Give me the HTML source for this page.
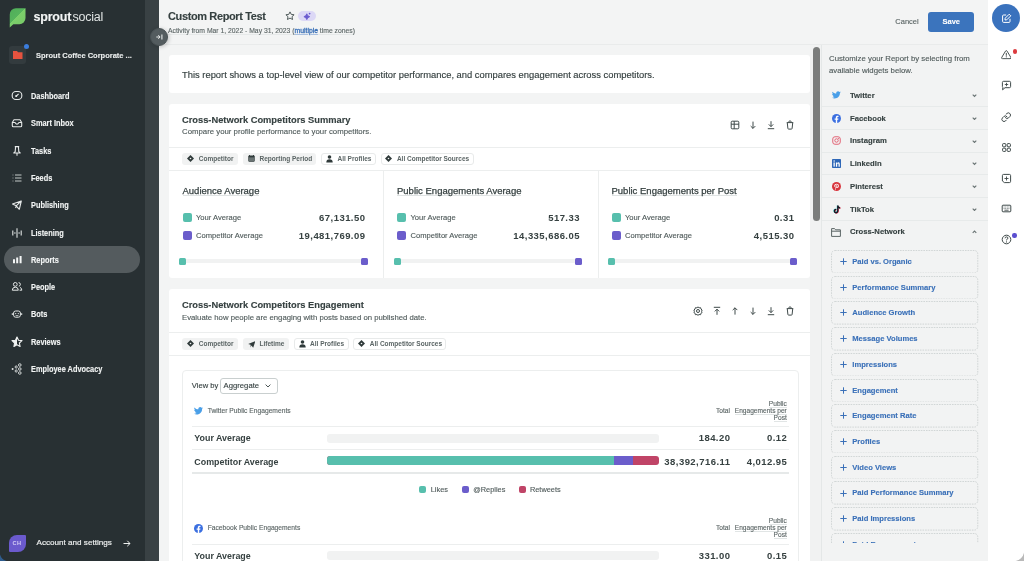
<!DOCTYPE html>
<html><head><meta charset="utf-8">
<style>
*{box-sizing:border-box;margin:0;padding:0}
html{background:#f3f4f4}
html,body{width:1024px;height:561px;overflow:hidden;}
body{will-change:transform;-webkit-text-stroke-width:.12px;font-family:"Liberation Sans",sans-serif;color:#364141}
.a{position:absolute}
.t{position:absolute;white-space:nowrap;line-height:1}
#side{left:0;top:0;width:145px;height:561px;background:#283033}
#strip{left:145px;top:0;width:14px;height:561px;background:#394144}
.nav{position:absolute;left:31.2px;transform:scaleX(.9);transform-origin:0 0;font-weight:700;font-size:8.2px;color:#f2f4f4;white-space:nowrap;line-height:1}
.nic{position:absolute;left:11px;width:12px;height:12px}
#hdr{left:159px;top:0;width:829px;height:45px;background:#f3f4f4;border-bottom:1px solid #e9ebeb}
.card{position:absolute;z-index:-1;left:169px;width:641px;background:#fff;border-radius:3px}
.hr{position:absolute;height:1px;background:#eceeee}
.chip{position:absolute;height:12.5px;border-radius:3px;font-size:6.5px;font-weight:700;color:#5b6565;-webkit-text-stroke-width:0;white-space:nowrap;line-height:12.5px}
.chip.g{background:#f1f2f2}
.chip.w{background:#fff;border:1px solid #e8eaea;line-height:10.5px}
.chip svg{position:absolute;top:2.6px}
.chip.w svg{top:1.7px}
.sq{position:absolute;width:9px;height:9px;border-radius:2px}
.teal{background:#57bfad}.purp{background:#6b5dcb}.red{background:#c04467}
.widget{position:absolute;width:147.3px;height:23.6px}
.widget>svg.bd{position:absolute;left:0;top:0}
.wtxt{position:absolute;left:21px;top:8px;font-size:7.6px;font-weight:700;color:#3a70b8;white-space:nowrap;line-height:1}
.wplus{position:absolute;left:8.8px;top:8.2px;width:7px;height:7px}
.net{position:absolute;left:850px;font-size:7.7px;font-weight:700;color:#364141;white-space:nowrap;line-height:1}
.pdiv{position:absolute;left:822px;width:166px;height:1px;background:#e7eaea}
.mtitle{font-size:9.5px;color:#364141;border-bottom:1px solid #dfe3e3;padding-bottom:0;-webkit-text-stroke:.25px #364141}
.mlab{font-size:7.6px;color:#4f5a5a}
.mval{font-size:9.5px;font-weight:700;color:#364141;letter-spacing:.45px;margin-right:-.45px;-webkit-text-stroke-width:0}
.rail{position:absolute;left:1000px;width:12px;height:12px}
</style></head><body>

<!-- SIDEBAR -->
<div id="side" class="a"></div>
<div id="strip" class="a"></div>

<!-- logo -->
<svg class="a" style="left:0;top:0" width="40" height="32" viewBox="0 0 40 32">
<defs><linearGradient id="lg" x1="9.75" y1="8.25" x2="25.5" y2="24" gradientUnits="userSpaceOnUse"><stop offset="0" stop-color="#4fae58"/><stop offset=".5" stop-color="#56b45d"/><stop offset=".5" stop-color="#7ccf6b"/><stop offset="1" stop-color="#77c867"/></linearGradient></defs>
<path d="M9.75 14.5 A6.2 6.2 0 0 1 15.95 8.25 H25.5 V18.05 A6.2 6.2 0 0 1 19.3 24.25 H13.3 L9.75 27.6 Z" fill="url(#lg)"/>
</svg>
<div class="t" style="left:33.5px;top:11.2px;font-size:12.5px;color:#f4f6f6;letter-spacing:-0.2px"><span style="font-weight:700">sprout</span><span style="font-weight:400;margin-left:1.2px;color:#dfe3e3;-webkit-text-stroke-width:0">social</span></div>

<!-- workspace -->
<div class="a" style="left:9px;top:45.5px;width:17px;height:18px;border-radius:3px;background:#333b3e"></div>
<svg class="a" style="left:12.5px;top:50.5px" width="10" height="8" viewBox="0 0 10 8"><path d="M0 0 H4 L5 1.3 H9.5 V8 H0 Z" fill="#e5533f"/></svg>
<div class="a" style="left:24px;top:43.5px;width:5px;height:5px;border-radius:50%;background:#3b7ddd"></div>
<div class="t" style="left:36px;top:51.5px;font-size:7.5px;font-weight:700;color:#e9ecec">Sprout Coffee Corporate ...</div>

<!-- nav -->
<div class="a" style="left:4px;top:246px;width:136px;height:27px;border-radius:13.5px;background:#545b5e"></div>
<svg class="nic" style="top:90.0px" viewBox="0 0 12 12"><rect x="1.2" y="1.5" width="9.6" height="8" rx="3.6" fill="none" stroke="#e6e9e9" stroke-width="1.1"/><path d="M4.8 6.6 L7.6 3.8" stroke="#e6e9e9" stroke-width="1.2"/><circle cx="5.2" cy="6.1" r="1" fill="#e6e9e9"/></svg>
<div class="nav" style="top:93.06px">Dashboard</div>
<svg class="nic" style="top:117.3px" viewBox="0 0 12 12"><path d="M1.3 5.5 V8.8 Q1.3 9.8 2.3 9.8 H9.7 Q10.7 9.8 10.7 8.8 V5.5 L9 2.7 H3 Z M1.3 5.5 H4 Q5 7.2 6 7.2 Q7 7.2 8 5.5 H10.7" fill="none" stroke="#e6e9e9" stroke-width="1.1" stroke-linejoin="round"/></svg>
<div class="nav" style="top:120.36px">Smart Inbox</div>
<svg class="nic" style="top:144.6px" viewBox="0 0 12 12"><path d="M3.8 1.6 H8.2 M4.6 1.6 L4.2 6.6 L2.8 8 H9.2 L7.8 6.6 L7.4 1.6 M6 8 V10.8" fill="none" stroke="#e6e9e9" stroke-width="1.1" stroke-linejoin="round"/></svg>
<div class="nav" style="top:147.66px">Tasks</div>
<svg class="nic" style="top:172.0px" viewBox="0 0 12 12"><path d="M1.6 3 H2.4 M1.6 6 H2.4 M1.6 9 H2.4" stroke="#aab1b1" stroke-width="1"/><path d="M4 3 H10.5 M4 6 H10.5 M4 9 H10.5" stroke="#c4caca" stroke-width="1"/></svg>
<div class="nav" style="top:175.06px">Feeds</div>
<svg class="nic" style="top:199.0px" viewBox="0 0 12 12"><path d="M1.5 5 L10.3 2 L8.3 10.3 L5.2 6.8 Z M5.2 6.8 L10.3 2 M5.2 6.8 L4.6 9" fill="none" stroke="#e6e9e9" stroke-width="1.1" stroke-linejoin="round"/></svg>
<div class="nav" style="top:202.06px">Publishing</div>
<svg class="nic" style="top:226.5px" viewBox="0 0 12 12"><path d="M1.8 3.6 V8.4 M6 1.2 V10.8 M10.2 3.6 V8.4" stroke="#dfe3e3" stroke-width="1.1"/><path d="M3.9 5.2 V6.8 M8.1 5.2 V6.8" stroke="#dfe3e3" stroke-width="1.1"/></svg>
<div class="nav" style="top:229.56px">Listening</div>
<svg class="nic" style="top:254.0px" viewBox="0 0 12 12"><path d="M2 5.2 H4 V9.2 H2Z M5.2 3.4 H7.2 V9.2 H5.2Z M8.6 2.1 H10.6 V9.2 H8.6Z" fill="#f4f6f6"/></svg>
<div class="nav" style="top:257.06px">Reports</div>
<svg class="nic" style="top:281.0px" viewBox="0 0 12 12"><circle cx="4.3" cy="3.4" r="1.9" fill="none" stroke="#e6e9e9" stroke-width="1"/><path d="M1.3 9.2 Q1.3 6.2 4.3 6.2 Q7.3 6.2 7.3 9.2 Z" fill="none" stroke="#e6e9e9" stroke-width="1"/><path d="M7.6 1.6 Q9.6 1.8 9.4 3.6 Q9.2 5 7.8 5.2 M9 6.4 Q10.8 7 10.8 9.2 H8.6" fill="none" stroke="#e6e9e9" stroke-width="1"/></svg>
<div class="nav" style="top:284.06px">People</div>
<svg class="nic" style="top:308.4px" viewBox="0 0 12 12"><rect x="2.6" y="3" width="6.8" height="6.2" rx="2" fill="none" stroke="#e6e9e9" stroke-width="1"/><path d="M1.3 5.2 V7 M10.7 5.2 V7" stroke="#e6e9e9" stroke-width="1"/><circle cx="4.7" cy="5.6" r=".65" fill="#e6e9e9"/><circle cx="7.3" cy="5.6" r=".65" fill="#e6e9e9"/><path d="M4.6 7.6 H7.4" stroke="#e6e9e9" stroke-width=".8"/></svg>
<div class="nav" style="top:311.46px">Bots</div>
<svg class="nic" style="top:335.8px" viewBox="0 0 12 12"><path d="M6 1 L7.5 4.2 L11 4.6 L8.4 7 L9.1 10.5 L6 8.8 L2.9 10.5 L3.6 7 L1 4.6 L4.5 4.2 Z" fill="none" stroke="#f0f2f2" stroke-width="1.1" stroke-linejoin="round"/><path d="M6 1 L4.5 4.2 L1 4.6 L3.6 7 L2.9 10.5 L6 8.8Z" fill="#f0f2f2"/></svg>
<div class="nav" style="top:338.86px">Reviews</div>
<svg class="nic" style="top:363.3px" viewBox="0 0 12 12"><circle cx="8.8" cy="2" r="1.3" fill="none" stroke="#e0e3e3" stroke-width=".9"/><circle cx="8.8" cy="6" r="1.3" fill="none" stroke="#e0e3e3" stroke-width=".9"/><circle cx="8.8" cy="10" r="1.3" fill="none" stroke="#e0e3e3" stroke-width=".9"/><circle cx="5.2" cy="4" r="1.1" fill="none" stroke="#e0e3e3" stroke-width=".9"/><circle cx="5.2" cy="8" r="1.1" fill="none" stroke="#e0e3e3" stroke-width=".9"/><circle cx="1.6" cy="6" r="1" fill="#e0e3e3"/></svg>
<div class="nav" style="top:366.36px">Employee Advocacy</div>

<!-- account -->
<div class="a" style="left:9px;top:534.5px;width:17px;height:17.5px;background:#6b5acd;border-radius:8px 1px 8px 1px"></div>
<div class="t" style="left:12.4px;top:540.5px;font-size:5.6px;font-weight:700;color:#d5cef5;letter-spacing:.5px;-webkit-text-stroke-width:0">CH</div>
<div class="t" style="left:36.6px;top:539.3px;font-size:8.1px;color:#eef0f0;-webkit-text-stroke-width:.18px">Account and settings</div>
<svg class="a" style="left:122.6px;top:539.6px" width="8" height="7" viewBox="0 0 8 7"><path d="M0.5 3.5 H7 M4.3 0.8 L7 3.5 L4.3 6.2" fill="none" stroke="#eef0f0" stroke-width="1"/></svg>

<!-- HEADER -->
<div id="hdr" class="a"></div>
<div class="t" style="left:168px;top:11px;font-size:11px;font-weight:700;letter-spacing:-0.38px;color:#364141">Custom Report Test</div>
<div class="t" style="left:168px;top:27.5px;font-size:6.8px;color:#5b6565;border-bottom:1px solid #e6e9e9;padding-bottom:0">Activity from Mar 1, 2022 - May 31, 2023 (<span style="color:#3a70b8;text-decoration:underline;text-decoration-color:#a9c0e0;-webkit-text-stroke-width:.3px">multiple</span> time zones)</div>

<!-- collapse button -->
<div class="a" style="left:150px;top:28px;width:18px;height:18px;border-radius:50%;background:#545c5f;border:.5px solid #4a5255;box-shadow:1px 1px 4px rgba(0,0,0,.22)"></div>
<svg class="a" style="left:155.5px;top:34px" width="7" height="6" viewBox="0 0 7 6"><path d="M0.3 3 H4 M2.3 1.2 L4.1 3 L2.3 4.8" fill="none" stroke="#e9ecec" stroke-width="1"/><path d="M5.9 0.4 V5.6" stroke="#e9ecec" stroke-width="1.1"/></svg>
<svg class="a" style="left:285.3px;top:11px" width="10" height="9.5" viewBox="0 0 10 9.5"><path d="M5 .9 L6.25 3.4 L9.1 3.75 L7 5.65 L7.55 8.5 L5 7.1 L2.45 8.5 L3 5.65 L.9 3.75 L3.75 3.4Z" fill="none" stroke="#4a5555" stroke-width=".95" stroke-linejoin="round"/></svg>
<div class="a" style="left:298.2px;top:11.1px;width:18px;height:9.7px;border-radius:5px;background:#dcd8f6"></div>
<svg class="a" style="left:302px;top:11.5px" width="10" height="9" viewBox="0 0 10 9"><path d="M4.8 1.8 Q5.3 4.1 7.7 4.7 Q5.3 5.3 4.8 7.6 Q4.3 5.3 1.9 4.7 Q4.3 4.1 4.8 1.8Z" fill="#6a5acf" stroke="#6a5acf" stroke-width=".9" stroke-linejoin="round"/><circle cx="7.6" cy="1.6" r=".9" fill="#6a5acf"/></svg>

<!-- Main cards -->
<div class="card" style="top:55px;height:38px"></div>
<div class="t" style="left:182px;top:69.5px;font-size:9.4px;color:#364141;-webkit-text-stroke:.15px #364141">This report shows a top-level view of our competitor performance, and compares engagement across competitors.</div>

<div class="card" style="top:104px;height:174px"></div>
<div class="t" style="left:182px;top:115.5px;font-size:9.3px;font-weight:700;color:#364141">Cross-Network Competitors Summary</div>
<div class="t" style="left:182px;top:128px;font-size:7.8px;color:#4f5a5a">Compare your profile performance to your competitors.</div>
<div class="hr" style="left:169px;top:147px;width:641px"></div>
<div class="hr" style="left:169px;top:170px;width:641px"></div>

<!-- card header icons -->
<svg class="a" style="left:730.0px;top:120.3px" width="10" height="10" viewBox="0 0 10 10"><rect x="1.2" y="1.2" width="7.6" height="7.6" rx="1" fill="none" stroke="#3f4a4a" stroke-width="1"/><path d="M1.2 4.2 H8.8 M4.2 1.2 V8.8" fill="none" stroke="#3f4a4a" stroke-width="1"/></svg>
<svg class="a" style="left:748.2px;top:120.3px" width="10" height="10" viewBox="0 0 10 10"><path d="M5 1.6 V8.4 M2.7 6.1 L5 8.4 L7.3 6.1" fill="none" stroke="#3f4a4a" stroke-width="1"/></svg>
<svg class="a" style="left:766.2px;top:120.3px" width="10" height="10" viewBox="0 0 10 10"><path d="M5 1.2 V6.6 M2.8 4.4 L5 6.6 L7.2 4.4 M1.8 8.7 H8.2" fill="none" stroke="#3f4a4a" stroke-width="1"/></svg>
<svg class="a" style="left:784.8px;top:120.3px" width="10" height="10" viewBox="0 0 10 10"><path d="M2.3 3 L2.9 8.5 Q3 9.1 3.6 9.1 H6.4 Q7 9.1 7.1 8.5 L7.7 3 M1.7 2.6 H8.3 M3.9 2.4 V1.6 Q3.9 1 4.5 1 H5.5 Q6.1 1 6.1 1.6 V2.4" fill="none" stroke="#3f4a4a" stroke-width="1"/></svg>
<svg class="a" style="left:693.2px;top:305.6px" width="10" height="10" viewBox="0 0 10 10"><path d="M5 0.9 L6.1 1.8 L7.6 1.7 L8 3.1 L9.1 4 L8.6 5.3 L9.1 6.5 L7.9 7.3 L7.6 8.7 L6.1 8.5 L5 9.3 L3.9 8.5 L2.4 8.7 L2.1 7.3 L0.9 6.5 L1.4 5.3 L0.9 4 L2 3.1 L2.4 1.7 L3.9 1.8Z" fill="none" stroke="#3f4a4a" stroke-width="1" stroke-linejoin="round"/><circle cx="5" cy="5" r="1.5" fill="none" stroke="#3f4a4a" stroke-width="1"/></svg>
<svg class="a" style="left:711.9px;top:305.6px" width="10" height="10" viewBox="0 0 10 10"><path d="M1.8 1.3 H8.2 M5 8.8 V3.2 M2.8 5.4 L5 3.2 L7.2 5.4" fill="none" stroke="#3f4a4a" stroke-width="1"/></svg>
<svg class="a" style="left:729.8px;top:305.6px" width="10" height="10" viewBox="0 0 10 10"><path d="M5 8.6 V1.8 M2.7 4.1 L5 1.8 L7.3 4.1" fill="none" stroke="#3f4a4a" stroke-width="1"/></svg>
<svg class="a" style="left:748.2px;top:305.6px" width="10" height="10" viewBox="0 0 10 10"><path d="M5 1.6 V8.4 M2.7 6.1 L5 8.4 L7.3 6.1" fill="none" stroke="#3f4a4a" stroke-width="1"/></svg>
<svg class="a" style="left:766.4px;top:305.6px" width="10" height="10" viewBox="0 0 10 10"><path d="M5 1.2 V6.6 M2.8 4.4 L5 6.6 L7.2 4.4 M1.8 8.7 H8.2" fill="none" stroke="#3f4a4a" stroke-width="1"/></svg>
<svg class="a" style="left:784.9px;top:305.6px" width="10" height="10" viewBox="0 0 10 10"><path d="M2.3 3 L2.9 8.5 Q3 9.1 3.6 9.1 H6.4 Q7 9.1 7.1 8.5 L7.7 3 M1.7 2.6 H8.3 M3.9 2.4 V1.6 Q3.9 1 4.5 1 H5.5 Q6.1 1 6.1 1.6 V2.4" fill="none" stroke="#3f4a4a" stroke-width="1"/></svg>
<!-- card1 chips -->
<div class="chip g" style="left:182.2px;top:152.5px;width:56.2px"><svg style="left:4.8px" width="7" height="7" viewBox="0 0 7 7"><path d="M3.5 0 L7 3.5 L3.5 7 L0 3.5Z" fill="#2f3a3a"/><circle cx="3.5" cy="3.5" r=".8" fill="#f1f2f2"/></svg><span style="position:absolute;left:16.6px">Competitor</span></div>
<div class="chip g" style="left:243px;top:152.5px;width:73.4px"><svg style="left:4.8px;top:2.8px" width="7" height="7" viewBox="0 0 7 7"><rect x="0.3" y="0.6" width="6.4" height="6.2" rx="1" fill="#2f3a3a"/><rect x="1" y="2.4" width="5" height="3.8" fill="#6a7474"/><path d="M1.5 0 V1.2 M5.5 0 V1.2" stroke="#2f3a3a" stroke-width=".9"/></svg><span style="position:absolute;left:16.5px">Reporting Period</span></div>
<div class="chip w" style="left:321.4px;top:152.5px;width:54.4px"><svg style="left:3.6px;top:1.7px" width="7" height="7.5" viewBox="0 0 7 7.5"><circle cx="3.5" cy="2" r="1.8" fill="#2f3a3a"/><path d="M0.3 7.5 Q0.3 4.3 3.5 4.3 Q6.7 4.3 6.7 7.5Z" fill="#2f3a3a"/></svg><span style="position:absolute;left:15.1px">All Profiles</span></div>
<div class="chip w" style="left:380.5px;top:152.5px;width:93.0px"><svg style="left:3.7px" width="7" height="7" viewBox="0 0 7 7"><path d="M3.5 0 L7 3.5 L3.5 7 L0 3.5Z" fill="#2f3a3a"/><circle cx="3.5" cy="3.5" r=".8" fill="#f1f2f2"/></svg><span style="position:absolute;left:15.4px">All Competitor Sources</span></div>
<!-- card2 chips -->
<div class="chip g" style="left:182.2px;top:337.8px;width:56.2px"><svg style="left:4.8px" width="7" height="7" viewBox="0 0 7 7"><path d="M3.5 0 L7 3.5 L3.5 7 L0 3.5Z" fill="#2f3a3a"/><circle cx="3.5" cy="3.5" r=".8" fill="#f1f2f2"/></svg><span style="position:absolute;left:16.6px">Competitor</span></div>
<div class="chip g" style="left:243px;top:337.8px;width:46.4px"><svg style="left:4.8px;top:2.8px" width="7.5" height="7" viewBox="0 0 7.5 7"><path d="M0.2 3 L7.3 0.2 L5.2 6.8 L3.4 4.5 L2.6 6.6 L2.6 3.8Z" fill="#2f3a3a"/></svg><span style="position:absolute;left:16.5px">Lifetime</span></div>
<div class="chip w" style="left:294px;top:337.8px;width:54.8px"><svg style="left:3.6px;top:1.7px" width="7" height="7.5" viewBox="0 0 7 7.5"><circle cx="3.5" cy="2" r="1.8" fill="#2f3a3a"/><path d="M0.3 7.5 Q0.3 4.3 3.5 4.3 Q6.7 4.3 6.7 7.5Z" fill="#2f3a3a"/></svg><span style="position:absolute;left:15.1px">All Profiles</span></div>
<div class="chip w" style="left:353.4px;top:337.8px;width:92.9px"><svg style="left:3.7px" width="7" height="7" viewBox="0 0 7 7"><path d="M3.5 0 L7 3.5 L3.5 7 L0 3.5Z" fill="#2f3a3a"/><circle cx="3.5" cy="3.5" r=".8" fill="#f1f2f2"/></svg><span style="position:absolute;left:15.4px">All Competitor Sources</span></div>
<!-- metrics -->
<div class="a" style="left:383px;top:171px;width:1px;height:107px;background:#eceeee"></div>
<div class="a" style="left:597.5px;top:171px;width:1px;height:107px;background:#eceeee"></div>
<div class="t mtitle" style="left:182.5px;top:185.7px">Audience Average</div>
<div class="sq teal" style="left:182.5px;top:213.2px"></div>
<div class="sq purp" style="left:182.5px;top:231.3px"></div>
<div class="t mlab" style="left:196.0px;top:214.4px">Your Average</div>
<div class="t mlab" style="left:196.0px;top:232.4px">Competitor Average</div>
<div class="t mval" style="right:659.0px;top:212.6px">67,131.50</div>
<div class="t mval" style="right:659.0px;top:230.6px">19,481,769.09</div>
<div class="a" style="left:182px;top:258.8px;width:183px;height:4.7px;background:#f1f2f2"></div>
<div class="a teal" style="left:179.3px;top:257.7px;width:7px;height:7px;border-radius:1.5px"></div>
<div class="a purp" style="left:360.8px;top:257.7px;width:7px;height:7px;border-radius:1.5px"></div>
<div class="t mtitle" style="left:397.0px;top:185.7px">Public Engagements Average</div>
<div class="sq teal" style="left:397.0px;top:213.2px"></div>
<div class="sq purp" style="left:397.0px;top:231.3px"></div>
<div class="t mlab" style="left:410.5px;top:214.4px">Your Average</div>
<div class="t mlab" style="left:410.5px;top:232.4px">Competitor Average</div>
<div class="t mval" style="right:444.5px;top:212.6px">517.33</div>
<div class="t mval" style="right:444.5px;top:230.6px">14,335,686.05</div>
<div class="a" style="left:396.5px;top:258.8px;width:183px;height:4.7px;background:#f1f2f2"></div>
<div class="a teal" style="left:393.8px;top:257.7px;width:7px;height:7px;border-radius:1.5px"></div>
<div class="a purp" style="left:575.3px;top:257.7px;width:7px;height:7px;border-radius:1.5px"></div>
<div class="t mtitle" style="left:611.5px;top:185.7px">Public Engagements per Post</div>
<div class="sq teal" style="left:611.5px;top:213.2px"></div>
<div class="sq purp" style="left:611.5px;top:231.3px"></div>
<div class="t mlab" style="left:625.0px;top:214.4px">Your Average</div>
<div class="t mlab" style="left:625.0px;top:232.4px">Competitor Average</div>
<div class="t mval" style="right:230.0px;top:212.6px">0.31</div>
<div class="t mval" style="right:230.0px;top:230.6px">4,515.30</div>
<div class="a" style="left:611px;top:258.8px;width:183px;height:4.7px;background:#f1f2f2"></div>
<div class="a teal" style="left:608.3px;top:257.7px;width:7px;height:7px;border-radius:1.5px"></div>
<div class="a purp" style="left:789.8px;top:257.7px;width:7px;height:7px;border-radius:1.5px"></div>
<div class="card" style="top:289px;height:300px"></div>
<div class="t" style="left:182px;top:300.5px;font-size:9.3px;font-weight:700;color:#364141">Cross-Network Competitors Engagement</div>
<div class="t" style="left:182px;top:314px;font-size:7.76px;color:#4f5a5a">Evaluate how people are engaging with posts based on published date.</div>
<div class="hr" style="left:169px;top:332px;width:641px"></div>
<div class="hr" style="left:169px;top:355px;width:641px"></div>

<!-- card2 body -->
<div class="a" style="left:182px;top:369.5px;width:616.5px;height:260px;border:1px solid #eceeee;border-radius:4px"></div>
<div class="t" style="left:191.8px;top:381.97px;font-size:7.6px;color:#364141">View by</div>
<div class="a" style="left:220.2px;top:378.3px;width:57.4px;height:15.3px;border:1px solid #c9cfcf;border-radius:3px"></div>
<div class="t" style="left:223.6px;top:382.48px;font-size:7.7px;color:#364141">Aggregate</div>
<svg class="a" style="left:265px;top:384.3px" width="6" height="4" viewBox="0 0 6 4"><path d="M0.6 0.6 L3 3 L5.4 0.6" fill="none" stroke="#364141" stroke-width=".9"/></svg>
<svg class="a" style="left:193.9px;top:407.1px" width="9.2" height="7.7" viewBox="0 0 24 20"><path d="M23.6 2.4c-.9.4-1.8.6-2.8.8 1-.6 1.8-1.5 2.1-2.7-.9.6-2 1-3.1 1.2C18.9.7 17.6.1 16.2.1c-2.7 0-4.9 2.2-4.9 4.9 0 .4 0 .8.1 1.1C7.3 5.9 3.7 4 1.3 1 .9 1.700.6 2.6.6 3.5c0 1.7.9 3.2 2.2 4.1-.8 0-1.6-.2-2.2-.6v.1c0 2.4 1.7 4.4 3.9 4.8-.4.1-.8.2-1.3.2-.3 0-.6 0-.9-.1.6 2 2.4 3.4 4.6 3.4-1.700 1.3-3.800 2.1-6.100 2.1-.4 0-.8 0-1.2-.1 2.2 1.4 4.8 2.2 7.5 2.2 9.1 0 14-7.5 14-14v-.6c1-.7 1.8-1.6 2.5-2.6z" fill="#4a9fe8"/></svg>
<div class="t" style="left:207.7px;top:408.1px;font-size:6.7px;color:#5b6565">Twitter Public Engagements</div>
<div class="t" style="right:294.0px;top:407.5px;font-size:6.6px;color:#5b6565">Total</div>
<div class="t" style="right:237.2px;top:399.8px;font-size:6.6px;line-height:7.1px;color:#5b6565;text-align:right"><span style="border-bottom:1px solid #e1e5e5;">Public</span><br><span style="border-bottom:1px solid #e1e5e5;">Engagements per</span><br><span style="border-bottom:1px solid #e1e5e5;">Post</span></div>
<div class="a" style="left:191.8px;top:426.4px;width:597px;height:1px;background:#eceeee"></div>
<div class="t" style="left:194.3px;top:434.47px;font-size:8.9px;font-weight:700;color:#364141;-webkit-text-stroke-width:0">Your Average</div>
<div class="a" style="left:326.5px;top:433.5px;width:332.3px;height:9.2px;border-radius:3px;background:#f1f2f2"></div>
<div class="t" style="right:294.0px;top:433.46px;font-size:9.5px;font-weight:700;color:#364141;letter-spacing:.45px;margin-right:-.45px;-webkit-text-stroke-width:0">184.20</div>
<div class="t" style="right:237.2px;top:433.46px;font-size:9.5px;font-weight:700;color:#364141;letter-spacing:.45px;margin-right:-.45px;-webkit-text-stroke-width:0">0.12</div>
<div class="a" style="left:191.8px;top:449.4px;width:597px;height:1px;background:#eceeee"></div>
<div class="t" style="left:194.3px;top:457.77px;font-size:8.9px;font-weight:700;color:#364141;-webkit-text-stroke-width:0">Competitor Average</div>
<div class="a" style="left:326.5px;top:456.1px;width:332.3px;height:9.2px;border-radius:3px;overflow:hidden;background:#c04467"><div class="a teal" style="left:0;top:0;width:287.3px;height:100%"></div><div class="a purp" style="left:287.3px;top:0;width:19.3px;height:100%"></div></div>
<div class="t" style="right:294.0px;top:456.76px;font-size:9.5px;font-weight:700;color:#364141;letter-spacing:.45px;margin-right:-.45px;-webkit-text-stroke-width:0">38,392,716.11</div>
<div class="t" style="right:237.2px;top:456.76px;font-size:9.5px;font-weight:700;color:#364141;letter-spacing:.45px;margin-right:-.45px;-webkit-text-stroke-width:0">4,012.95</div>
<div class="a" style="left:191.8px;top:472.3px;width:597px;height:1.5px;background:#e6e9e9"></div>
<div class="a teal" style="left:419px;top:485.5px;width:7px;height:7px;border-radius:2px"></div>
<div class="t" style="left:430.7px;top:485.54px;font-size:7.4px;color:#4f5a5a">Likes</div>
<div class="a purp" style="left:461.7px;top:485.5px;width:7px;height:7px;border-radius:2px"></div>
<div class="t" style="left:473.2px;top:485.54px;font-size:7.4px;color:#4f5a5a">@Replies</div>
<div class="a red" style="left:518.5px;top:485.5px;width:7px;height:7px;border-radius:2px"></div>
<div class="t" style="left:529.9px;top:485.54px;font-size:7.4px;color:#4f5a5a">Retweets</div>
<svg class="a" style="left:193.9px;top:523.8px" width="9" height="9" viewBox="0 0 24 24"><circle cx="12" cy="12" r="12" fill="#3b6fe0"/><path d="M16.7 15.5l.5-3.5h-3.3V9.8c0-1 .5-1.9 2-1.9h1.5V5s-1.4-.2-2.7-.2c-2.8 0-4.6 1.7-4.6 4.7V12H7v3.5h3.1V24h3.8v-8.5z" fill="#fff"/></svg>
<div class="t" style="left:207.7px;top:525.4px;font-size:6.7px;color:#5b6565">Facebook Public Engagements</div>
<div class="t" style="right:294.0px;top:525px;font-size:6.6px;color:#5b6565">Total</div>
<div class="t" style="right:237.2px;top:517.3px;font-size:6.6px;line-height:7.1px;color:#5b6565;text-align:right"><span style="border-bottom:1px solid #e1e5e5;">Public</span><br><span style="border-bottom:1px solid #e1e5e5;">Engagements per</span><br><span style="border-bottom:1px solid #e1e5e5;">Post</span></div>
<div class="a" style="left:191.8px;top:543.9px;width:597px;height:1px;background:#eceeee"></div>
<div class="t" style="left:194.3px;top:551.97px;font-size:8.9px;font-weight:700;color:#364141;-webkit-text-stroke-width:0">Your Average</div>
<div class="a" style="left:326.5px;top:551.0px;width:332.3px;height:9.2px;border-radius:3px;background:#f1f2f2"></div>
<div class="t" style="right:294.0px;top:550.96px;font-size:9.5px;font-weight:700;color:#364141;letter-spacing:.45px;margin-right:-.45px;-webkit-text-stroke-width:0">331.00</div>
<div class="t" style="right:237.2px;top:550.96px;font-size:9.5px;font-weight:700;color:#364141;letter-spacing:.45px;margin-right:-.45px;-webkit-text-stroke-width:0">0.15</div>
<div class="a" style="left:191.8px;top:544px;width:597px;height:1px;background:#eceeee"></div>
<!-- scrollbar -->
<div class="a" style="left:810px;top:45px;width:11px;height:516px;background:#f1f2f2"></div>
<div class="a" style="left:812.7px;top:46.5px;width:7.5px;height:174.5px;border-radius:3.75px;background:#7b7d7c"></div>

<!-- Right panel -->
<div class="a" style="left:821px;top:45px;width:167px;height:516px;background:#f2f3f3;border-left:1px solid #e4e7e7"></div>

<!-- right panel content -->
<div class="t" style="left:829px;top:52.7px;font-size:7.8px;line-height:12.8px;color:#4f5a5a">Customize your Report by selecting from<br>available widgets below.</div>
<svg class="a" style="left:831.5px;top:90.8px" width="9" height="8" viewBox="0 0 24 20"><path d="M23.6 2.4c-.9.4-1.8.6-2.8.8 1-.6 1.8-1.5 2.1-2.7-.9.6-2 1-3.1 1.2C18.9.7 17.6.1 16.2.1c-2.7 0-4.9 2.2-4.9 4.9 0 .4 0 .8.1 1.1C7.3 5.9 3.7 4 1.3 1 .9 1.7.6 2.6.6 3.5c0 1.7.9 3.2 2.2 4.1-.8 0-1.6-.2-2.2-.6v.1c0 2.4 1.7 4.4 3.9 4.8-.4.1-.8.2-1.3.2-.3 0-.6 0-.9-.1.6 2 2.4 3.4 4.6 3.4-1.7 1.3-3.8 2.1-6.1 2.1-.4 0-.8 0-1.2-.1 2.2 1.4 4.8 2.2 7.5 2.2 9.1 0 14-7.5 14-14v-.6c1-.7 1.8-1.6 2.5-2.6z" fill="#4a9fe8"/></svg>
<div class="net" style="top:91.7px">Twitter</div>
<svg class="a" style="left:972.1px;top:94.0px" width="5" height="3.5" viewBox="0 0 5 3.5"><path d="M0.7 0.7 L2.5 2.5 L4.3 0.7" fill="none" stroke="#6b7575" stroke-width="1.1"/></svg>
<div class="pdiv" style="top:106.0px"></div>
<svg class="a" style="left:831.5px;top:113.6px" width="9" height="9" viewBox="0 0 24 24"><circle cx="12" cy="12" r="12" fill="#3b6fe0"/><path d="M16.7 15.5l.5-3.5h-3.3V9.8c0-1 .5-1.9 2-1.9h1.5V5s-1.4-.2-2.7-.2c-2.8 0-4.6 1.7-4.6 4.7V12H7v3.5h3.1V24h3.8v-8.5z" fill="#fff"/></svg>
<div class="net" style="top:114.5px">Facebook</div>
<svg class="a" style="left:972.1px;top:116.8px" width="5" height="3.5" viewBox="0 0 5 3.5"><path d="M0.7 0.7 L2.5 2.5 L4.3 0.7" fill="none" stroke="#6b7575" stroke-width="1.1"/></svg>
<div class="pdiv" style="top:128.8px"></div>
<svg class="a" style="left:831.5px;top:136.4px" width="9" height="9" viewBox="0 0 12 12"><rect x="1" y="1" width="10" height="10" rx="3" fill="none" stroke="#e0566a" stroke-width="1.2"/><circle cx="6" cy="6" r="2.3" fill="none" stroke="#e0566a" stroke-width="1.2"/><circle cx="8.8" cy="3.2" r=".7" fill="#e0566a"/></svg>
<div class="net" style="top:137.3px">Instagram</div>
<svg class="a" style="left:972.1px;top:139.6px" width="5" height="3.5" viewBox="0 0 5 3.5"><path d="M0.7 0.7 L2.5 2.5 L4.3 0.7" fill="none" stroke="#6b7575" stroke-width="1.1"/></svg>
<div class="pdiv" style="top:151.6px"></div>
<svg class="a" style="left:831.5px;top:159.1px" width="9" height="9" viewBox="0 0 12 12"><rect x="0" y="0" width="12" height="12" rx="1" fill="#2e67b7"/><rect x="2" y="4.6" width="1.7" height="5.6" fill="#fff"/><circle cx="2.85" cy="2.7" r="1" fill="#fff"/><path d="M5.2 4.6 H6.8 V5.5 Q7.4 4.4 8.7 4.4 Q10.4 4.4 10.4 6.6 V10.2 H8.7 V7 Q8.7 5.9 7.9 5.9 Q6.9 5.9 6.9 7.1 V10.2 H5.2Z" fill="#fff"/></svg>
<div class="net" style="top:160.0px">LinkedIn</div>
<svg class="a" style="left:972.1px;top:162.3px" width="5" height="3.5" viewBox="0 0 5 3.5"><path d="M0.7 0.7 L2.5 2.5 L4.3 0.7" fill="none" stroke="#6b7575" stroke-width="1.1"/></svg>
<div class="pdiv" style="top:174.3px"></div>
<svg class="a" style="left:831.5px;top:181.9px" width="9" height="9" viewBox="0 0 12 12"><circle cx="6" cy="6" r="6" fill="#d8353d"/><path d="M6.2 2.3 Q9.2 2.4 9.2 5.2 Q9.1 8 6.6 8 Q5.8 8 5.4 7.4 L4.8 10.2 Q4.6 10.9 4.2 11.4 Q4 9.8 4.4 8.6 L5.1 5.7 Q4.9 5.3 5 4.8 Q5.3 3.9 5.9 4.1 Q6.4 4.4 6.1 5.3 Q5.8 6.4 6.5 6.6 Q7.8 6.6 7.9 5 Q7.8 3.4 6.1 3.3 Q4.1 3.4 4 5.2 Q4.1 5.9 4.4 6.2 L4.2 6.9 Q3 6.4 2.9 5 Q3.1 2.4 6.2 2.3Z" fill="#fff"/></svg>
<div class="net" style="top:182.8px">Pinterest</div>
<svg class="a" style="left:972.1px;top:185.1px" width="5" height="3.5" viewBox="0 0 5 3.5"><path d="M0.7 0.7 L2.5 2.5 L4.3 0.7" fill="none" stroke="#6b7575" stroke-width="1.1"/></svg>
<div class="pdiv" style="top:197.1px"></div>
<svg class="a" style="left:831.5px;top:204.7px" width="9" height="9" viewBox="0 0 12 12"><path d="M6.8 0.8 H8.6 Q8.8 2.8 10.8 3 V4.8 Q9.6 4.8 8.6 4.1 V8 Q8.4 11 5.3 11.2 Q2.4 11 2.2 8 Q2.4 5 5.6 4.9 V6.8 Q4.2 6.8 4.1 8 Q4.2 9.3 5.4 9.4 Q6.8 9.3 6.8 7.8Z" fill="#ee3a58" transform="translate(.6 .3)"/><path d="M6.8 0.8 H8.6 Q8.8 2.8 10.8 3 V4.8 Q9.6 4.8 8.6 4.1 V8 Q8.4 11 5.3 11.2 Q2.4 11 2.2 8 Q2.4 5 5.6 4.9 V6.8 Q4.2 6.8 4.1 8 Q4.2 9.3 5.4 9.4 Q6.8 9.3 6.8 7.8Z" fill="#4ad7d1" transform="translate(-.5 -.3)"/><path d="M6.8 0.8 H8.6 Q8.8 2.8 10.8 3 V4.8 Q9.6 4.8 8.6 4.1 V8 Q8.4 11 5.3 11.2 Q2.4 11 2.2 8 Q2.4 5 5.6 4.9 V6.8 Q4.2 6.8 4.1 8 Q4.2 9.3 5.4 9.4 Q6.8 9.3 6.8 7.8Z" fill="#161823"/></svg>
<div class="net" style="top:205.6px">TikTok</div>
<svg class="a" style="left:972.1px;top:207.9px" width="5" height="3.5" viewBox="0 0 5 3.5"><path d="M0.7 0.7 L2.5 2.5 L4.3 0.7" fill="none" stroke="#6b7575" stroke-width="1.1"/></svg>
<div class="pdiv" style="top:219.9px"></div>
<svg class="a" style="left:831px;top:227.5px" width="10" height="9" viewBox="0 0 10 9"><path d="M0.6 8.4 V0.6 H3.6 L4.6 1.8 H9.4 V8.4 Z M0.6 3.2 H9.4" fill="none" stroke="#5b6565" stroke-width="1"/></svg>
<div class="net" style="top:228.4px">Cross-Network</div>
<svg class="a" style="left:972.1px;top:230.3px" width="5" height="3.5" viewBox="0 0 5 3.5"><path d="M0.7 2.8 L2.5 1 L4.3 2.8" fill="none" stroke="#6b7575" stroke-width="1.1"/></svg>
<div class="a" style="left:822px;top:245px;width:166px;height:298px;overflow:hidden">
<div class="widget" style="left:9.3px;top:4.9px"><svg class="bd" width="147.3" height="23.6" viewBox="0 0 147.3 23.6"><rect x=".5" y=".5" width="146.3" height="22.6" rx="3.5" fill="none" stroke="#cdd2d2" stroke-width=".9" stroke-dasharray="1.6 1"/></svg><svg class="wplus" viewBox="0 0 7 7"><path d="M3.5 0.3 V6.7 M0.3 3.5 H6.7" stroke="#3a70b8" stroke-width="1"/></svg><div class="wtxt">Paid vs. Organic</div></div>
<div class="widget" style="left:9.3px;top:30.6px"><svg class="bd" width="147.3" height="23.6" viewBox="0 0 147.3 23.6"><rect x=".5" y=".5" width="146.3" height="22.6" rx="3.5" fill="none" stroke="#cdd2d2" stroke-width=".9" stroke-dasharray="1.6 1"/></svg><svg class="wplus" viewBox="0 0 7 7"><path d="M3.5 0.3 V6.7 M0.3 3.5 H6.7" stroke="#3a70b8" stroke-width="1"/></svg><div class="wtxt">Performance Summary</div></div>
<div class="widget" style="left:9.3px;top:56.3px"><svg class="bd" width="147.3" height="23.6" viewBox="0 0 147.3 23.6"><rect x=".5" y=".5" width="146.3" height="22.6" rx="3.5" fill="none" stroke="#cdd2d2" stroke-width=".9" stroke-dasharray="1.6 1"/></svg><svg class="wplus" viewBox="0 0 7 7"><path d="M3.5 0.3 V6.7 M0.3 3.5 H6.7" stroke="#3a70b8" stroke-width="1"/></svg><div class="wtxt">Audience Growth</div></div>
<div class="widget" style="left:9.3px;top:82.1px"><svg class="bd" width="147.3" height="23.6" viewBox="0 0 147.3 23.6"><rect x=".5" y=".5" width="146.3" height="22.6" rx="3.5" fill="none" stroke="#cdd2d2" stroke-width=".9" stroke-dasharray="1.6 1"/></svg><svg class="wplus" viewBox="0 0 7 7"><path d="M3.5 0.3 V6.7 M0.3 3.5 H6.7" stroke="#3a70b8" stroke-width="1"/></svg><div class="wtxt">Message Volumes</div></div>
<div class="widget" style="left:9.3px;top:107.8px"><svg class="bd" width="147.3" height="23.6" viewBox="0 0 147.3 23.6"><rect x=".5" y=".5" width="146.3" height="22.6" rx="3.5" fill="none" stroke="#cdd2d2" stroke-width=".9" stroke-dasharray="1.6 1"/></svg><svg class="wplus" viewBox="0 0 7 7"><path d="M3.5 0.3 V6.7 M0.3 3.5 H6.7" stroke="#3a70b8" stroke-width="1"/></svg><div class="wtxt">Impressions</div></div>
<div class="widget" style="left:9.3px;top:133.5px"><svg class="bd" width="147.3" height="23.6" viewBox="0 0 147.3 23.6"><rect x=".5" y=".5" width="146.3" height="22.6" rx="3.5" fill="none" stroke="#cdd2d2" stroke-width=".9" stroke-dasharray="1.6 1"/></svg><svg class="wplus" viewBox="0 0 7 7"><path d="M3.5 0.3 V6.7 M0.3 3.5 H6.7" stroke="#3a70b8" stroke-width="1"/></svg><div class="wtxt">Engagement</div></div>
<div class="widget" style="left:9.3px;top:159.2px"><svg class="bd" width="147.3" height="23.6" viewBox="0 0 147.3 23.6"><rect x=".5" y=".5" width="146.3" height="22.6" rx="3.5" fill="none" stroke="#cdd2d2" stroke-width=".9" stroke-dasharray="1.6 1"/></svg><svg class="wplus" viewBox="0 0 7 7"><path d="M3.5 0.3 V6.7 M0.3 3.5 H6.7" stroke="#3a70b8" stroke-width="1"/></svg><div class="wtxt">Engagement Rate</div></div>
<div class="widget" style="left:9.3px;top:184.9px"><svg class="bd" width="147.3" height="23.6" viewBox="0 0 147.3 23.6"><rect x=".5" y=".5" width="146.3" height="22.6" rx="3.5" fill="none" stroke="#cdd2d2" stroke-width=".9" stroke-dasharray="1.6 1"/></svg><svg class="wplus" viewBox="0 0 7 7"><path d="M3.5 0.3 V6.7 M0.3 3.5 H6.7" stroke="#3a70b8" stroke-width="1"/></svg><div class="wtxt">Profiles</div></div>
<div class="widget" style="left:9.3px;top:210.7px"><svg class="bd" width="147.3" height="23.6" viewBox="0 0 147.3 23.6"><rect x=".5" y=".5" width="146.3" height="22.6" rx="3.5" fill="none" stroke="#cdd2d2" stroke-width=".9" stroke-dasharray="1.6 1"/></svg><svg class="wplus" viewBox="0 0 7 7"><path d="M3.5 0.3 V6.7 M0.3 3.5 H6.7" stroke="#3a70b8" stroke-width="1"/></svg><div class="wtxt">Video Views</div></div>
<div class="widget" style="left:9.3px;top:236.4px"><svg class="bd" width="147.3" height="23.6" viewBox="0 0 147.3 23.6"><rect x=".5" y=".5" width="146.3" height="22.6" rx="3.5" fill="none" stroke="#cdd2d2" stroke-width=".9" stroke-dasharray="1.6 1"/></svg><svg class="wplus" viewBox="0 0 7 7"><path d="M3.5 0.3 V6.7 M0.3 3.5 H6.7" stroke="#3a70b8" stroke-width="1"/></svg><div class="wtxt">Paid Performance Summary</div></div>
<div class="widget" style="left:9.3px;top:262.1px"><svg class="bd" width="147.3" height="23.6" viewBox="0 0 147.3 23.6"><rect x=".5" y=".5" width="146.3" height="22.6" rx="3.5" fill="none" stroke="#cdd2d2" stroke-width=".9" stroke-dasharray="1.6 1"/></svg><svg class="wplus" viewBox="0 0 7 7"><path d="M3.5 0.3 V6.7 M0.3 3.5 H6.7" stroke="#3a70b8" stroke-width="1"/></svg><div class="wtxt">Paid Impressions</div></div>
<div class="widget" style="left:9.3px;top:287.8px"><svg class="bd" width="147.3" height="23.6" viewBox="0 0 147.3 23.6"><rect x=".5" y=".5" width="146.3" height="22.6" rx="3.5" fill="none" stroke="#cdd2d2" stroke-width=".9" stroke-dasharray="1.6 1"/></svg><svg class="wplus" viewBox="0 0 7 7"><path d="M3.5 0.3 V6.7 M0.3 3.5 H6.7" stroke="#3a70b8" stroke-width="1"/></svg><div class="wtxt">Paid Engagement</div></div>
</div>
<div class="t" style="left:895.3px;top:18px;font-size:7.5px;color:#5b6565">Cancel</div>
<div class="a" style="left:928px;top:12.3px;width:46px;height:19.3px;border-radius:3px;background:#3b74bd"></div>
<div class="t" style="left:942.5px;top:18.1px;font-size:7.5px;font-weight:700;color:#fff">Save</div>
<!-- Right rail -->
<div class="a" style="left:988px;top:0;width:36px;height:561px;background:#fff"></div>
<div class="a" style="left:992px;top:4px;width:28px;height:28px;border-radius:50%;background:#3a72bd"></div>

<!-- rail icons -->
<svg class="a" style="left:1000.5px;top:12.7px" width="11" height="11" viewBox="0 0 11 11"><path d="M5.2 2 H2.6 Q1.6 2 1.6 3 V8.4 Q1.6 9.4 2.6 9.4 H8 Q9 9.4 9 8.4 V5.8" fill="none" stroke="#fff" stroke-width="1"/><path d="M8.2 1.2 L9.8 2.8 L5.8 6.8 L4 7 L4.2 5.2Z" fill="none" stroke="#fff" stroke-width="1" stroke-linejoin="round"/></svg>
<svg class="a" style="left:1000.6px;top:50.2px" width="10.6" height="10" viewBox="0 0 24 22.5"><path d="M10.29 2.36L1.82 16.5a2 2 0 0 0 1.71 3h16.94a2 2 0 0 0 1.71-3L13.71 2.36a2 2 0 0 0-3.42 0z" fill="none" stroke="#3f4a4a" stroke-width="2.1" stroke-linejoin="round"/><path d="M12 7.5v4.5" stroke="#3f4a4a" stroke-width="2.2" stroke-linecap="round"/><circle cx="12" cy="15.4" r="1.3" fill="#3f4a4a"/></svg>
<div class="a" style="left:1012.7px;top:49.3px;width:4.4px;height:4.4px;border-radius:50%;background:#dc3b3f"></div>
<svg class="a" style="left:1000.5px;top:80.2px" width="11" height="11" viewBox="0 0 11 11"><path d="M2.6 1.3 H8.4 Q9.6 1.3 9.6 2.5 V6.5 Q9.6 7.7 8.4 7.7 H4 L1.6 9.8 L1.8 7.4 Q1.4 7 1.4 6.5 V2.5 Q1.4 1.3 2.6 1.3Z" fill="none" stroke="#3f4a4a" stroke-width="1" stroke-linejoin="round"/><path d="M5.5 2.8 V6.2 M3.8 4.5 H7.2" stroke="#3f4a4a" stroke-width=".9"/></svg>
<svg class="a" style="left:1000.8px;top:111.6px" width="10.4" height="10.4" viewBox="0 0 24 24"><path d="M10 13a5 5 0 0 0 7.54.54l3-3a5 5 0 0 0-7.07-7.07l-1.72 1.71M14 11a5 5 0 0 0-7.54-.54l-3 3a5 5 0 0 0 7.07 7.07l1.71-1.71" fill="none" stroke="#3f4a4a" stroke-width="2.3" stroke-linecap="round" stroke-linejoin="round"/></svg>
<svg class="a" style="left:1000.5px;top:142.3px" width="11" height="11" viewBox="0 0 11 11"><rect x="1.6" y="1.6" width="3.2" height="3.2" rx=".8" fill="none" stroke="#3f4a4a" stroke-width="1"/><rect x="6.2" y="1.6" width="3.2" height="3.2" rx=".8" fill="none" stroke="#3f4a4a" stroke-width="1"/><rect x="1.6" y="6.2" width="3.2" height="3.2" rx=".8" fill="none" stroke="#3f4a4a" stroke-width="1"/><rect x="6.2" y="6.2" width="3.2" height="3.2" rx=".8" fill="none" stroke="#3f4a4a" stroke-width="1"/></svg>
<svg class="a" style="left:1000.5px;top:172.5px" width="11" height="11" viewBox="0 0 11 11"><path d="M2.6 1.4 H8.4 Q9.6 1.4 9.6 2.6 V8.4 Q9.6 9.6 8.4 9.6 H3.4 L1.4 8 V2.6 Q1.4 1.4 2.6 1.4Z" fill="none" stroke="#3f4a4a" stroke-width="1"/><path d="M5.5 3.5 V7.5 M3.5 5.5 H7.5" stroke="#3f4a4a" stroke-width=".9"/></svg>
<svg class="a" style="left:1000.5px;top:203.3px" width="11" height="11" viewBox="0 0 11 11"><rect x="1.2" y="2.2" width="8.6" height="6.6" rx=".8" fill="none" stroke="#3f4a4a" stroke-width="1"/><path d="M2.6 4 H8.4 M2.6 5.5 H8.4" stroke="#8a9292" stroke-width="1" stroke-dasharray="1 .6"/><path d="M3.4 7.2 H7.6" stroke="#3f4a4a" stroke-width=".9"/></svg>
<svg class="a" style="left:1000.5px;top:234.1px" width="11" height="11" viewBox="0 0 11 11"><circle cx="5.5" cy="5.5" r="4.3" fill="none" stroke="#3f4a4a" stroke-width="1"/><path d="M4.1 4.3 Q4.1 2.9 5.5 2.9 Q6.9 2.9 6.9 4.1 Q6.9 5 5.8 5.4 Q5.5 5.6 5.5 6.4" fill="none" stroke="#3f4a4a" stroke-width="1"/><circle cx="5.5" cy="7.9" r=".6" fill="#3f4a4a"/></svg>
<div class="a" style="left:1012.4px;top:233.3px;width:4.4px;height:4.4px;border-radius:50%;background:#5b4fd0"></div>
<!-- window corners -->
<div class="a" style="left:0;top:553px;width:8px;height:8px;background:radial-gradient(circle at 8px 0,rgba(0,0,0,0) 7.6px,#2f5c8e 8.4px)"></div>
<div class="a" style="left:1014px;top:551px;width:10px;height:10px;background:radial-gradient(circle at 0 0,rgba(0,0,0,0) 9.6px,#b9b9b9 10.4px)"></div>
</body></html>
